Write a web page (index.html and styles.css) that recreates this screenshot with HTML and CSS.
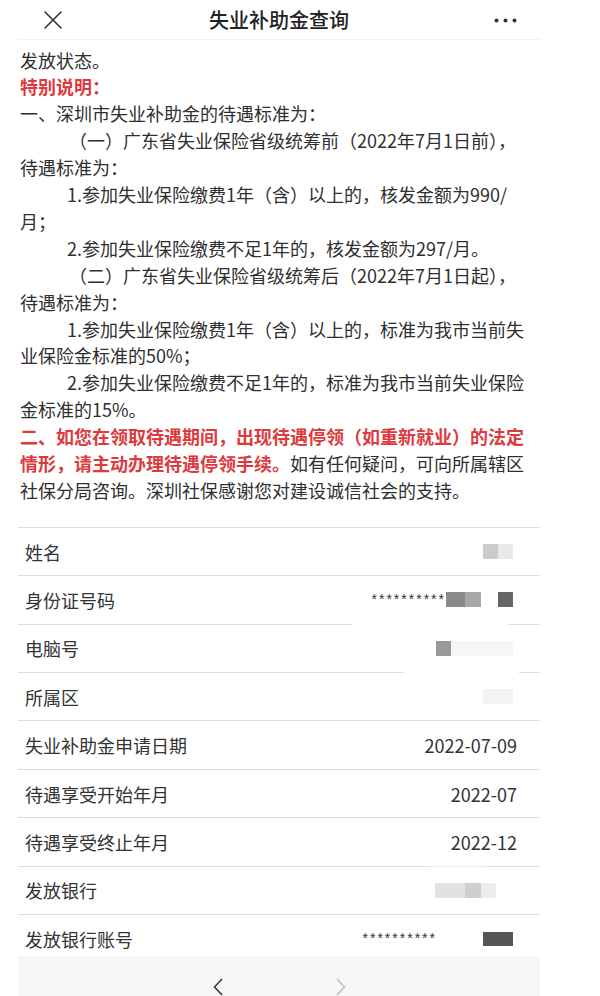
FILE: index.html
```html
<!DOCTYPE html>
<html lang="zh-CN">
<head>
<meta charset="utf-8">
<title>失业补助金查询</title>
<link rel="stylesheet" href="styles.css">
</head>
<body>
<div class="page">
  <header class="topbar">
    <span class="close">
      <svg width="18" height="18" viewBox="0 0 18 18"><path d="M1 1 L17 17 M17 1 L1 17" stroke="#333" stroke-width="1.6" fill="none" stroke-linecap="round"/></svg>
    </span>
    <h1 class="title">失业补助金查询</h1>
    <span class="more">
      <svg width="23" height="5" viewBox="0 0 23 5"><circle cx="2.5" cy="2.5" r="2" fill="#333"/><circle cx="11.5" cy="2.5" r="2" fill="#333"/><circle cx="20.5" cy="2.5" r="2" fill="#333"/></svg>
    </span>
  </header>

  <section class="notice">
    <p>发放状态。</p>
    <p class="red strong">特别说明：</p>
    <p>一、深圳市失业补助金的待遇标准为：</p>
    <p class="ind-a">（一）广东省失业保险省级统筹前（2022年7月1日前），<br>待遇标准为：</p>
    <p class="ind-b">1.参加失业保险缴费1年（含）以上的，核发金额为990/<br>月；</p>
    <p class="ind-b">2.参加失业保险缴费不足1年的，核发金额为297/月。</p>
    <p class="ind-a">（二）广东省失业保险省级统筹后（2022年7月1日起），<br>待遇标准为：</p>
    <p class="ind-b">1.参加失业保险缴费1年（含）以上的，标准为我市当前失<br>业保险金标准的50%；</p>
    <p class="ind-b">2.参加失业保险缴费不足1年的，标准为我市当前失业保险<br>金标准的15%。</p>
    <p><strong class="red">二、如您在领取待遇期间，出现待遇停领（如重新就业）的法定<br>情形，请主动办理待遇停领手续。</strong>如有任何疑问，可向所属辖区<br>社保分局咨询。深圳社保感谢您对建设诚信社会的支持。</p>
  </section>

  <ul class="info">
    <li class="row"><span class="label">姓名</span><span class="value v-name"><i class="blk w15 c-cb"></i><i class="blk w15 c-e9"></i></span></li>
    <li class="row"><span class="label">身份证号码</span><span class="value v-id"><span class="stars">**********</span><i class="blk w19 c-8a"></i><i class="blk w16 c-a8"></i><i class="blk w15 c-66 gap17"></i></span></li>
    <li class="row row-cut-a"><span class="label">电脑号</span><span class="value v-pc"><i class="blk w15 c-99"></i><i class="blk w62 c-f5"></i></span></li>
    <li class="row row-cut-b"><span class="label">所属区</span><span class="value v-area"><i class="blk w30 c-f3"></i></span></li>
    <li class="row"><span class="label">失业补助金申请日期</span><span class="value">2022-07-09</span></li>
    <li class="row"><span class="label">待遇享受开始年月</span><span class="value">2022-07</span></li>
    <li class="row"><span class="label">待遇享受终止年月</span><span class="value">2022-12</span></li>
    <li class="row row-cut-c"><span class="label">发放银行</span><span class="value v-bank"><i class="blk w30 c-e2"></i><i class="blk w16 c-cf"></i><i class="blk w15 c-ea"></i></span></li>
    <li class="row"><span class="label">发放银行账号</span><span class="value v-acct"><span class="stars">**********</span><i class="blk w30 c-55 gap46 h14"></i></span></li>
  </ul>
</div>

<nav class="toolbar">
  <svg width="10" height="18" viewBox="0 0 10 18"><polyline points="9,1 1.5,9 9,17" fill="none" stroke="#333" stroke-width="1.5"/></svg>
  <svg width="10" height="18" viewBox="0 0 10 18"><polyline points="1,1 8.5,9 1,17" fill="none" stroke="#bdbdbd" stroke-width="1.5"/></svg>
</nav>
</body>
</html>
```

FILE: styles.css
```css
* { box-sizing: border-box; }

html, body {
  margin: 0;
  padding: 0;
  background: #ffffff;
}

body {
  font-family: "Noto Sans CJK SC", "Noto Sans", sans-serif;
  color: #2f2f2f;
}

.page {
  width: 522px;
  margin-left: 18px;
}

.topbar {
  height: 40px;
  padding-top: 1px;
  display: grid;
  grid-template-columns: 1fr auto 1fr;
  align-items: center;
  border-bottom: 1px solid #f2f2f2;
}

.close {
  justify-self: start;
  padding-left: 26px;
  display: flex;
}

.title {
  margin: 0;
  font-size: 20px;
  font-weight: 500;
  line-height: 28px;
  color: #222;
}

.more {
  justify-self: end;
  padding-right: 23px;
  display: flex;
}

.notice {
  margin-top: 6.5px;
  padding-left: 2px;
  font-size: 18px;
  line-height: 26.9px;
  white-space: nowrap;
}

.notice p {
  margin: 0;
}

.red { color: #dc3a3c; }
.strong, strong { font-weight: 700; }

.ind-a { text-indent: 49px; }
.ind-b { text-indent: 47px; }

.info {
  list-style: none;
  margin: 23px 0 0;
  padding: 0;
}

.row {
  height: 48.4px;
  border-top: 1px solid #dedede;
  display: flex;
  justify-content: space-between;
  align-items: center;
  padding: 0 23px 0 7px;
  font-size: 18px;
  color: #333;
}

.row-cut-a,
.row-cut-b,
.row-cut-c {
  border-top: 1px solid transparent;
  background-repeat: no-repeat;
  background-size: 100% 1px;
  background-position: 0 0;
  background-origin: border-box;
}

.row-cut-a {
  background-image: linear-gradient(to right, #dedede 0, #dedede 334px, transparent 334px, transparent 490px, #dedede 490px);
}

.row-cut-b {
  background-image: linear-gradient(to right, #dedede 0, #dedede 386px, transparent 386px, transparent 501px, #dedede 501px);
}

.row-cut-c {
  background-image: linear-gradient(to right, #dedede 0, #dedede 410px, #ececec 410px, #ececec 468px, #dedede 468px);
}

.value {
  display: flex;
  align-items: center;
}

.v-name, .v-id, .v-pc, .v-area, .v-acct { padding-right: 4px; }
.v-bank { padding-right: 21px; }

.stars {
  font-family: "Liberation Sans", sans-serif;
  font-size: 14px;
  letter-spacing: 2px;
  line-height: 14px;
  color: #333;
  margin-top: -2px;
}

.blk {
  display: block;
  height: 15px;
  filter: blur(0.6px);
}

.h14 { height: 14px; }
.w15 { width: 15px; }
.w16 { width: 16px; }
.w19 { width: 19px; }
.w30 { width: 30px; }
.w62 { width: 62px; }
.gap17 { margin-left: 17px; }
.gap46 { margin-left: 46px; }

.c-cb { background: #cbcbcb; }
.c-e9 { background: #e9e9e9; }
.c-8a { background: #8a8a8a; }
.c-a8 { background: #a8a8a8; }
.c-66 { background: #666666; }
.c-99 { background: #999999; }
.c-f5 { background: #f6f6f6; }
.c-f3 { background: #f3f3f3; }
.c-e2 { background: #e2e2e2; }
.c-cf { background: #cfcfcf; }
.c-ea { background: #ececec; }
.c-55 { background: #555555; }

.toolbar {
  position: fixed;
  left: 18px;
  bottom: 0;
  width: 522px;
  height: 40px;
  background: #f6f6f6;
  display: flex;
  justify-content: center;
  align-items: flex-start;
  gap: 113px;
  padding-top: 22px;
}
```
